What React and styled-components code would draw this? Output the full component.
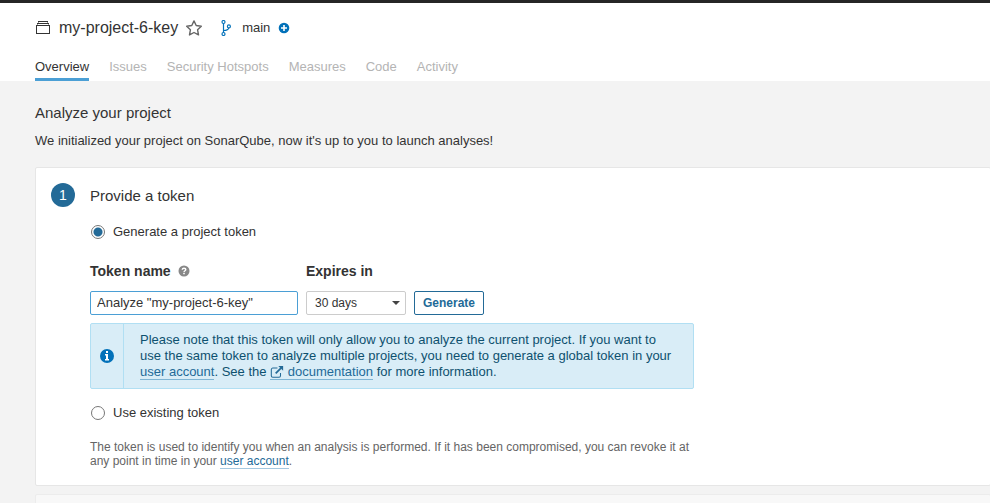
import React, { useState } from "react";
import styled, { createGlobalStyle } from "styled-components";

const GlobalStyle = createGlobalStyle`
  *, *::before, *::after { box-sizing: border-box; }
  body {
    margin: 0;
    background: #f3f3f3;
    color: #333;
    font-family: "Liberation Sans", Arial, sans-serif;
    font-size: 13px;
    line-height: 16px;
  }
  h1, h2, h3, p { margin: 0; font-weight: 400; }
  button, input, select { font-family: inherit; }
`;

const Page = styled.div`
  min-height: 100vh;
  overflow-x: hidden;
`;

const TopBar = styled.div`
  height: 3px;
  background: #262626;
`;

const Header = styled.header`
  padding: 13px 35px 0;
  background: #fff;
`;

const TitleRow = styled.div`
  display: flex;
  align-items: center;
  height: 24px;
`;

const ProjectName = styled.h1`
  margin: 0 8px;
  font-size: 16px;
  line-height: 24px;
`;

const IconButton = styled.button`
  display: flex;
  padding: 0;
  border: 0;
  background: none;
  cursor: pointer;
`;

const Branch = styled.div`
  display: flex;
  align-items: center;
  gap: 8px;
  margin-left: 16px;
`;

const Tabs = styled.nav`
  display: flex;
  gap: 20px;
  margin-top: 16px;
`;

const Tab = styled.a`
  padding: 3px 0;
  border-bottom: 3px solid ${(p) => (p.$active ? "#4b9fd5" : "transparent")};
  color: ${(p) => (p.$active ? "#333" : "#b4b4b4")};
  text-decoration: none;
`;

const Main = styled.main`
  padding: 22px 0 0 35px;
`;

const PageTitle = styled.h2`
  font-size: 15px;
  line-height: 20px;
`;

const Intro = styled.p`
  margin: 10px 0 18px;
`;

const Card = styled.section`
  display: grid;
  grid-template-columns: 24px minmax(0, 604px);
  column-gap: 15px;
  min-height: ${(p) => (p.$muted ? "56px" : "0")};
  margin: 0 -1px 8px 0;
  padding: 15px;
  border: 1px solid ${(p) => (p.$muted ? "#ececec" : "#e6e6e6")};
  border-radius: 2px;
  background: ${(p) => (p.$muted ? "#f8f8f8" : "#fff")};
`;

const StepNumber = styled.div`
  width: 24px;
  height: 24px;
  border-radius: 50%;
  background: #236a97;
  color: #fff;
  font-size: 14px;
  line-height: 24px;
  text-align: center;
`;

const StepTitle = styled.h2`
  margin-bottom: 15px;
  font-size: 15px;
  line-height: 26px;
`;

const RadioLabel = styled.label`
  display: flex;
  align-items: center;
  gap: 8px;
  width: max-content;
  padding-left: 1px;
`;

const Radio = styled.input`
  appearance: none;
  width: 14px;
  height: 14px;
  margin: 0;
  border: 1px solid #777;
  border-radius: 50%;
  background: #fff;

  &:checked {
    background: radial-gradient(circle, #236a97 4px, #fff 5px);
  }
`;

const TokenForm = styled.form`
  display: flex;
  align-items: flex-end;
  gap: 8px;
  margin: 21px 0 8px;
`;

const Field = styled.div`
  width: ${(p) => p.$width};
`;

const FieldHeading = styled.div`
  display: flex;
  align-items: center;
  gap: 7px;
  height: 20px;
  margin-bottom: 10px;
`;

const FieldLabel = styled.label`
  font-size: 14px;
  font-weight: 700;
  line-height: 20px;
`;

const TextInput = styled.input`
  display: block;
  width: 100%;
  height: 24px;
  padding: 0 6px 2px;
  border: 1px solid #4b9fd5;
  border-radius: 2px;
  outline: none;
  color: #333;
  font-size: 13px;
`;

const SelectBox = styled.div`
  display: grid;
  align-items: center;

  > * { grid-area: 1 / 1; }
  > svg { justify-self: end; margin-right: 6px; pointer-events: none; }
`;

const Select = styled.select`
  appearance: none;
  width: 100%;
  height: 24px;
  padding: 0 20px 0 8px;
  border: 1px solid #ccc;
  border-radius: 2px;
  background: #fff;
  color: #333;
  font-size: 12px;
`;

const GenerateButton = styled.button`
  width: 70px;
  height: 24px;
  padding: 0;
  border: 1px solid #236a97;
  border-radius: 2px;
  background: #fff;
  color: #236a97;
  font-size: 12px;
  font-weight: 700;
`;

const Alert = styled.div`
  display: flex;
  margin-bottom: 16px;
  border: 1px solid #b1dff3;
  border-radius: 2px;
  background: #d9edf7;
  color: #0e516f;
`;

const AlertIcon = styled.div`
  display: flex;
  flex: none;
  align-items: center;
  justify-content: center;
  width: 33px;
  border-right: 1px solid #b1dff3;
`;

const AlertText = styled.p`
  padding: 8px 16px;
`;

const Link = styled.a`
  border-bottom: 1px solid ${(p) => (p.$soft ? "#a4c8e0" : "#7fb5d4")};
  color: #236a97;
  text-decoration: none;

  svg { vertical-align: text-bottom; }
`;

const Note = styled.p`
  margin: 19px 0 2px;
  color: #656565;
  font-size: 12px;
  line-height: 14px;
`;

const ProjectIcon = () => (
  <svg width="16" height="16" viewBox="0 0 16 16" aria-hidden="true">
    <path
      fill="#333"
      d="M14.985 13.988L1 14.005 1.02 5h13.966v8.988h-.001zM1.998 5.995l.006 7.02L14.022 13 14 6.004l-12.002-.009zM3 4.5V4h9.996l.004.5h1l-.005-1.497-11.98.003L2 4.5h1zm1-2v-.504h8.002L12 2.5h.998l-.003-1.495H3.006L3 2.5h1z"
    />
  </svg>
);

const StarIcon = () => (
  <svg width="16" height="16" viewBox="0 0 16 16" aria-hidden="true">
    <path
      fill="none"
      stroke="#666"
      strokeWidth="1.4"
      strokeLinejoin="round"
      d="M8 .9l2.2 4.6 5.1.7-3.7 3.6.9 5.1L8 12.5l-4.5 2.4.9-5.1L.7 6.2l5.1-.7z"
    />
  </svg>
);

const BranchIcon = () => (
  <svg width="16" height="16" viewBox="0 0 16 16" aria-hidden="true">
    <g fill="none" stroke="#0271b9" strokeWidth="1.2">
      <circle cx="5.5" cy="2" r="1.5" />
      <circle cx="5.5" cy="14" r="1.5" />
      <circle cx="10.9" cy="6.4" r="1.5" />
      <path d="M5.5 3.5v9M5.5 10.5c3 0 5-.7 5.3-2.6" />
    </g>
  </svg>
);

const PlusIcon = () => (
  <svg width="12" height="12" viewBox="0 0 12 12" aria-hidden="true">
    <circle cx="6" cy="6" r="5.3" fill="#0271b9" />
    <path d="M6 3v6M3 6h6" stroke="#fff" strokeWidth="1.6" />
  </svg>
);

const HelpIcon = () => (
  <svg width="12" height="12" viewBox="0 0 12 12" aria-hidden="true">
    <circle cx="6" cy="6" r="5.5" fill="#888" />
    <path
      d="M4.2 4.7c.1-1 .8-1.5 1.8-1.5s1.8.5 1.8 1.4C7.8 5.8 6 5.7 6 7.1"
      fill="none"
      stroke="#fff"
      strokeWidth="1.4"
    />
    <path d="M5.2 7.8h1.6v1.4H5.200z" fill="#fff" />
  </svg>
);

const InfoIcon = () => (
  <svg width="14" height="14" viewBox="0 0 14 14" aria-hidden="true">
    <circle cx="7" cy="7" r="7" fill="#0271b9" />
    <path d="M6 2h2v2H6zM5 5h3v5h1v1.5H5V10h1V6.5H5z" fill="#fff" />
  </svg>
);

const ExternalIcon = () => (
  <svg width="14" height="14" viewBox="0 0 16 16" aria-hidden="true">
    <g fill="none" stroke="#236a97">
      <path
        strokeWidth="1.2"
        d="M8.5 3.5H3.2a1.7 1.7 0 0 0-1.7 1.7v7.1A1.7 1.7 0 0 0 3.2 14h7.1a1.7 1.7 0 0 0 1.7-1.7V9"
      />
      <path strokeWidth="2" d="M6.500 9.500l6-6" />
    </g>
    <path fill="#236a97" d="M9.500 1H15v5.500z" />
  </svg>
);

const CaretIcon = () => (
  <svg width="8" height="4" viewBox="0 0 8 4" aria-hidden="true">
    <path d="M0 0h8L4 4z" fill="#444" />
  </svg>
);

const tabs = ["Overview", "Issues", "Security Hotspots", "Measures", "Code", "Activity"];

export default function App() {
  const [mode, setMode] = useState("generate");
  const [name, setName] = useState('Analyze "my-project-6-key"');

  return (
    <>
      <GlobalStyle />
      <Page>
        <TopBar />
        <Header>
          <TitleRow>
            <ProjectIcon />
            <ProjectName>my-project-6-key</ProjectName>
            <IconButton type="button" aria-label="Add to favorites">
              <StarIcon />
            </IconButton>
            <Branch>
              <BranchIcon />
              <span>main</span>
              <IconButton type="button" aria-label="Add branch">
                <PlusIcon />
              </IconButton>
            </Branch>
          </TitleRow>
          <Tabs>
            {tabs.map((tab, i) => (
              <Tab key={tab} href="#" $active={i === 0}>
                {tab}
              </Tab>
            ))}
          </Tabs>
        </Header>
        <Main>
          <PageTitle>Analyze your project</PageTitle>
          <Intro>We initialized your project on SonarQube, now it's up to you to launch analyses!</Intro>
          <Card>
            <StepNumber>1</StepNumber>
            <div>
              <StepTitle>Provide a token</StepTitle>
              <RadioLabel>
                <Radio
                  type="radio"
                  name="mode"
                  checked={mode === "generate"}
                  onChange={() => setMode("generate")}
                />
                Generate a project token
              </RadioLabel>
              <TokenForm onSubmit={(e) => e.preventDefault()}>
                <Field $width="208px">
                  <FieldHeading>
                    <FieldLabel htmlFor="token-name">Token name</FieldLabel>
                    <HelpIcon />
                  </FieldHeading>
                  <TextInput id="token-name" value={name} onChange={(e) => setName(e.target.value)} />
                </Field>
                <Field $width="100px">
                  <FieldHeading>
                    <FieldLabel htmlFor="token-expiry">Expires in</FieldLabel>
                  </FieldHeading>
                  <SelectBox>
                    <Select id="token-expiry" defaultValue="30">
                      <option value="30">30 days</option>
                    </Select>
                    <CaretIcon />
                  </SelectBox>
                </Field>
                <GenerateButton type="submit">Generate</GenerateButton>
              </TokenForm>
              <Alert>
                <AlertIcon>
                  <InfoIcon />
                </AlertIcon>
                <AlertText>
                  Please note that this token will only allow you to analyze the current project. If you want to use the
                  same token to analyze multiple projects, you need to generate a global token in your{" "}
                  <Link href="#">user account</Link>. See the{" "}
                  <Link href="#">
                    <ExternalIcon /> documentation
                  </Link>{" "}
                  for more information.
                </AlertText>
              </Alert>
              <RadioLabel>
                <Radio
                  type="radio"
                  name="mode"
                  checked={mode === "existing"}
                  onChange={() => setMode("existing")}
                />
                Use existing token
              </RadioLabel>
              <Note>
                The token is used to identify you when an analysis is performed. If it has been compromised, you can
                revoke it at any point in time in your{" "}
                <Link href="#" $soft>
                  user account
                </Link>
                .
              </Note>
            </div>
          </Card>
          <Card $muted />
        </Main>
      </Page>
    </>
  );
}
